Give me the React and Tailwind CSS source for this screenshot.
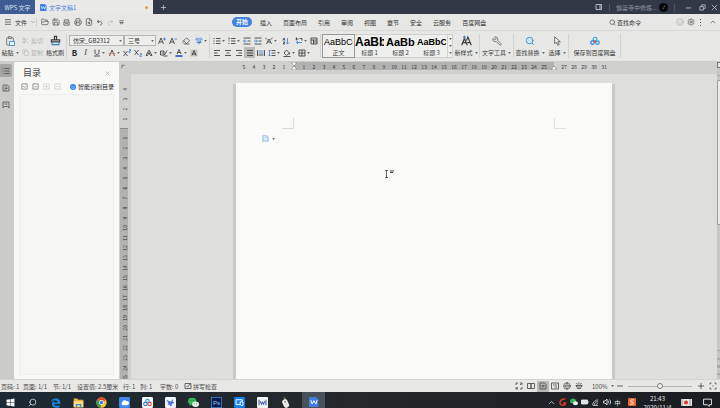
import {
  ChevronDown,
  ChevronUp,
  Clipboard,
  Copy,
  Eraser,
  FileSearch,
  FolderOpen,
  Globe,
  Menu,
  MousePointer2,
  Printer,
  Save,
  Scissors,
  Search,
  Settings,
  Smile,
  Wrench,
  X
} from "lucide-react"

const FONT = "font-['Noto_Sans_CJK_SC','Liberation_Sans',sans-serif]"

const MENU_TABS = ["插入", "页面布局", "引用", "审阅", "视图", "章节", "安全", "云服务", "百度网盘"]

const STYLES = [
  { name: "正文", preview: "text-[9px]", active: true },
  { name: "标题 1", preview: "text-[12px] font-bold" },
  { name: "标题 2", preview: "text-[11px] font-bold" },
  { name: "标题 3", preview: "text-[9px] font-bold" }
]

const H_MARKS = Array.from({ length: 37 }, (_, i) => i - 5)
const V_TOP = [4, 3, 2, 1]
const V_MARKS = Array.from({ length: 25 }, (_, i) => i + 1)

/* ---------- shared pieces ---------- */

// 16x16 line drawing
function Ico({ d, blue, size = "size-2", children }) {
  return (
    <svg viewBox="0 0 16 16" className={`${size} shrink-0`} fill="none" stroke="currentColor" strokeWidth="1.700">
      {d && <path d={d} />}
      {blue && <path d={blue} stroke="#3f7fd0" />}
      {children}
    </svg>
  )
}

function Caret() {
  return (
    <svg viewBox="0 0 4 3" className="h-[2px] w-[3px] shrink-0" fill="#666">
      <path d="M0 0h4L2 3z" />
    </svg>
  )
}

// toolbar button; `menu` adds the small drop-down caret
function Tool({ label, menu, wide, active, children }) {
  return (
    <button
      type="button"
      aria-label={label}
      className={`flex h-[11px] shrink-0 items-center ${menu || wide ? "w-[15px]" : "w-[11px]"} ${wide ? "justify-center" : ""} ${active ? "bg-[#b9b9b8]" : ""}`}
    >
      <span className="flex w-[11px] justify-center">{children}</span>
      {menu && <Caret />}
    </button>
  )
}

function BigTool({ label, menu, width, children }) {
  return (
    <button type="button" className={`flex shrink-0 flex-col items-center gap-[2px] pt-1 ${width}`}>
      <span className="flex h-[11px] items-center">{children}</span>
      <span className="flex items-center gap-[2px] whitespace-nowrap leading-[9px]">
        {label}
        {menu && <Caret />}
      </span>
    </button>
  )
}

function Combo({ label, value, width }) {
  return (
    <div className={`relative h-[11px] shrink-0 ${width}`}>
      <select
        aria-label={label}
        className="block h-full w-full appearance-none border border-[#b4b4b3] bg-[#eeeeed] pl-[3px] text-[6px] leading-[9px] text-[#333]"
      >
        <option>{value}</option>
      </select>
      <span className="pointer-events-none absolute inset-y-0 right-[2px] flex items-center">
        <Caret />
      </span>
    </div>
  )
}

function Divider() {
  return <div className="my-[3px] w-px shrink-0 bg-[#d3d3d2]" />
}

/* ---------- title bar ---------- */

function TitleBar() {
  return (
    <header className="flex h-[14px] shrink-0 items-center bg-[#333846] text-[#c9ccd3]">
      <button type="button" className="h-full w-[35px] bg-[#3e5c93] text-[6px] whitespace-nowrap text-[#dfe6f2]">
        WPS 文字
      </button>
      <div className="flex h-full w-[118px] items-center gap-[2px] bg-[#e9e9e8] px-[5px] text-[6px] text-[#4a80d6]">
        <WpsLogo size="size-[7px]" />
        <span>文字文稿1</span>
        <span className="ml-auto size-[3px] rounded-full bg-[#e39a4d]" />
      </div>
      <button type="button" aria-label="新建" className="flex w-5 justify-center">
        <Ico d="M8 2v12M2 8h12" size="size-[7px]" />
      </button>
      <div className="ml-auto flex h-full items-center text-[6px]">
        <Ico d="M2 3h8v10H2zM10 3h3v10h-3" size="size-[8px]" />
        <span className="mx-[6px] h-[7px] w-px bg-[#515663]" />
        <span className="text-[#9297a2]">伽蓝寺中修炼...</span>
        <svg viewBox="0 0 16 16" className="ml-[2px] size-[9px]">
          <circle cx="8" cy="8" r="8" fill="#07080b" />
          <path d="M8 8l3-3M6 10h2" stroke="#ccc" />
        </svg>
        <span className="mx-[6px] h-[7px] w-px bg-[#515663]" />
        <button type="button" aria-label="最小化" className="flex w-[14px] justify-center">
          <Ico d="M2 9h12" size="size-[7px]" />
        </button>
        <button type="button" aria-label="还原" className="flex w-[14px] justify-center">
          <Ico d="M2 6h8v8H2zM6 6V2h8v8h-4" size="size-[7px]" />
        </button>
        <button type="button" aria-label="关闭" className="flex w-[11px] justify-center">
          <Ico d="M2 2l12 12M14 2L2 14" size="size-[7px]" />
        </button>
      </div>
    </header>
  )
}

function WpsLogo({ size }) {
  return (
    <svg viewBox="0 0 16 16" className={`${size} shrink-0`}>
      <path d="M2 0h9l4 4v10a2 2 0 0 1-2 2H2a2 2 0 0 1-2-2V2a2 2 0 0 1 2-2z" fill="#3f7fe8" />
      <path d="M3 5l2 6 3-5 3 5 2-6" fill="none" stroke="#fff" strokeWidth="1.600" />
    </svg>
  )
}

/* ---------- menu ---------- */

function MenuBar() {
  return (
    <nav className="flex h-[17px] shrink-0 items-center border-b border-[#d9d9d8] text-[6px]">
      <button type="button" className="flex w-[37px] shrink-0 items-center gap-[3px] border-r border-[#cfcfce] pl-1">
        <Menu className="size-2" />
        文件
        <ChevronDown className="size-[6px] text-[#777]" />
      </button>
      <div className="flex w-[195px] shrink-0 pl-[2px] text-[#4c4c4c]">
        <Tool label="打开"><FolderOpen className="size-2" /></Tool>
        <Tool label="保存"><Save className="size-2" /></Tool>
        <Tool label="输出为PDF"><Ico d="M3 6V2h10v4M2 7h12v7H2zM5 10h6" size="size-[7px]" /></Tool>
        <Tool label="打印"><Printer className="size-2" /></Tool>
        <Tool label="打印预览"><FileSearch className="size-2" /></Tool>
        <Tool label="撤销"><Ico d="M6 2L3 6l4 3M3 6h6c6 0 6 7 0 8" size="size-[7px]" /></Tool>
        <Tool label="恢复">
          <span className="text-[#bbb]"><Ico d="M10 2l3 4-4 3M13 6H7c-6 0-6 7 0 8" size="size-[7px]" /></span>
        </Tool>
        <Tool label="自定义快速访问工具栏"><Ico d="M3 4h10M4 8h8l-4 4z" size="size-[7px]" /></Tool>
      </div>
      <div className="flex items-center gap-[11px] whitespace-nowrap">
        <button type="button" className="-mr-[3px] h-[10px] w-5 rounded-full bg-[#4380e0] leading-[10px] font-bold text-white">
          开始
        </button>
        {MENU_TABS.map((tab) => (
          <button type="button" key={tab}>{tab}</button>
        ))}
      </div>
      <label className="ml-auto flex w-[67px] shrink-0 items-center gap-px">
        <Search className="size-[7px]" />
        <input
          type="text"
          placeholder="查找命令"
          className="w-8 leading-[9px] outline-none placeholder:text-[#333]"
        />
      </label>
      <div className="flex shrink-0 items-center pr-[3px] text-[#555]">
        <button type="button" aria-label="反馈" className="w-[11px] text-[#aaa]"><Smile className="size-2" /></button>
        <button type="button" aria-label="设置" className="w-[13px]"><Settings className="size-2" /></button>
        <button type="button" aria-label="更多" className="flex w-[9px]">
          <svg viewBox="0 0 2 7" className="h-[7px] w-[2px]" fill="#555">
            <path d="M0 0h1v1H0zM0 3h1v1H0zM0 6h1v1H0z" />
          </svg>
        </button>
        <button type="button" aria-label="折叠功能区"><ChevronUp className="size-2" /></button>
      </div>
    </nav>
  )
}

/* ---------- ribbon ---------- */

function Ribbon() {
  return (
    <section className="flex h-[31px] shrink-0 overflow-hidden border-b border-[#cdcdcc] text-[6px] text-[#3a3a3a]">
      <BigTool label="粘贴" menu width="w-5">
        <span className="relative">
          <Clipboard className="size-[10px] text-[#666]" />
          <span className="absolute right-0 bottom-0 h-[5px] w-[6px] border border-[#4f9bd8] bg-[#eef5fb]" />
        </span>
      </BigTool>
      <div className="flex w-6 shrink-0 flex-col gap-px pt-1 text-[#b4b4b3]">
        <button type="button" className="flex h-[11px] items-center gap-[2px] pl-[2px]">
          <Scissors className="size-[7px] shrink-0" />
          <span className="whitespace-nowrap">剪切</span>
        </button>
        <button type="button" className="flex h-[11px] items-center gap-[2px] pl-[2px]">
          <Copy className="size-[7px] shrink-0" />
          <span className="whitespace-nowrap">复制</span>
        </button>
      </div>
      <BigTool label="格式刷" width="w-[22px]">
        <Ico size="size-[11px]" d="M6.500 7V2h3v5M2 7h12v3H2z" blue="M3 10v4h10v-4" />
      </BigTool>
      <Divider />

      <div className="flex w-[142px] shrink-0 flex-col gap-px pt-1 pl-[2px]">
        <div className="flex items-center">
          <Combo label="字体" value="仿宋_GB2312" width="w-[55px]" />
          <Combo label="字号" value="三号" width="w-8" />
          <Tool label="增大字号"><Ico d="M1 14L6 2l5 12M3 10h6" blue="M13 1v6M10 4h6" /></Tool>
          <Tool label="减小字号"><Ico d="M1 14L6 2l5 12M3 10h6" blue="M11 4h5" /></Tool>
          <Tool label="清除格式" wide><Eraser className="size-2" /></Tool>
          <Tool label="拼音指南" menu><Ico blue="M4 1l2 2M12 1l-2 2M2 7V4h12v3M4 8h8l-4 3v4M3 11h10" /></Tool>
        </div>
        <div className="flex">
          <Tool label="加粗"><b className="text-[8px] leading-none text-[#222]">B</b></Tool>
          <Tool label="倾斜"><i className="font-['Liberation_Serif',serif] text-[8px] leading-none">I</i></Tool>
          <Tool label="下划线" menu><Ico d="M4 1v6c0 5 8 5 8 0V1M2 14h12" /></Tool>
          <Tool label="删除线" menu><Ico d="M3 14L8 2l5 12"><path d="M1 9h14" stroke="#e07b4a" /></Ico></Tool>
          <Tool label="上标"><Ico d="M1 4l8 10M9 4L1 14" blue="M12 1h3v3h-3v3h3" /></Tool>
          <Tool label="下标"><Ico d="M1 2l8 10M9 2L1 12" blue="M12 9h3v3h-3v3h3" /></Tool>
          <Tool label="文字效果" menu><Ico d="M2 13L8 2l6 11h-3L8 7l-3 6z" /></Tool>
          <Tool label="突出显示" menu><Ico d="M1 4h7v8H1zM3 8h4M9 12l5-9M7 14h8" /></Tool>
          <Tool label="字体颜色" menu><Ico d="M4 10L8 1l4 9M5 7h6"><path d="M1 14h14" stroke="#2340b5" strokeWidth="3" /></Ico></Tool>
          <Tool label="字符底纹">
            <Ico><path d="M1 1h14v14H1z" fill="#c4c4c3" stroke="none" /><path d="M4 13L8 3l4 10M5 10h6" /></Ico>
          </Tool>
        </div>
      </div>
      <Divider />

      <div className="flex w-[110px] shrink-0 flex-col gap-px pt-1 pl-px">
        <div className="flex">
          <Tool label="项目符号" menu><Ico d="M6 3h9M6 8h9M6 13h9M1 3h2M1 8h2M1 13h2" /></Tool>
          <Tool label="编号" menu><Ico d="M6 3h9M6 8h9M6 13h9M2 1v4M1 8h2M1 13h2" /></Tool>
          <Tool label="减少缩进"><Ico d="M1 2h14M9 8h6M1 14h14" blue="M7 8H1m3-3L1 8l3 3" /></Tool>
          <Tool label="增加缩进"><Ico d="M1 2h14M9 8h6M1 14h14" blue="M0 8h6M4 5l3 3-3 3" /></Tool>
          <Tool label="中文版式" menu><Ico d="M1 2l3 3M15 2l-4 3M3 14L8 4l5 10M5 10h6" /></Tool>
          <Tool label="排序" wide><Ico d="M2 7l2-5 2 5M2 10h4l-4 4h4" blue="M11 2v12M8 11l3 3 3-3" /></Tool>
          <Tool label="显示编辑标记" menu><Ico d="M3 1v6M1 4h6M9 3h5v4" blue="M14 11H3m3-3l-3 3 3 3" /></Tool>
          <Tool label="插入表格"><Ico d="M2 2h12v12H2zM2 6h12M7 6v8M7 10h7" /></Tool>
        </div>
        <div className="flex">
          <Tool label="左对齐"><Ico d="M2 3h12M2 8h7M2 13h12" /></Tool>
          <Tool label="居中"><Ico d="M2 3h12M5 8h6M2 13h12" /></Tool>
          <Tool label="右对齐"><Ico d="M2 3h12M7 8h7M2 13h12" /></Tool>
          <Tool label="两端对齐" active><Ico d="M2 3h12M2 8h12M2 13h12" /></Tool>
          <Tool label="分散对齐"><Ico d="M1 2v12M15 2v12M3 12h10" blue="M3 4h10M3 8h10" /></Tool>
          <Tool label="行距" menu><Ico d="M7 3h8M7 8h8M7 13h8" blue="M3 2v12M1 4l2-2 2 2M1 12l2 2 2-2" /></Tool>
          <Tool label="底纹颜色" menu><Ico d="M7 2l6 6-6 5-5-5zM13 8v3M1 15h14" /></Tool>
          <Tool label="边框" menu><Ico d="M2 2h12v12H2zM8 2v12M2 8h12" /></Tool>
        </div>
      </div>
      <Divider />

      <div className="my-[3px] ml-px flex w-[131px] shrink-0 border border-[#cfcfce] bg-[#efefee]">
        {STYLES.map((s) => (
          <button
            type="button"
            key={s.name}
            className={`flex w-[31px] shrink-0 flex-col items-center overflow-hidden px-px ${s.active ? "outline outline-[#9a9a99]" : ""}`}
          >
            <span className={`h-[14px] w-full overflow-hidden text-left font-['Liberation_Sans',sans-serif] leading-[14px] text-black ${s.preview}`}>
              AaBbCc
            </span>
            <span className="leading-[8px]">{s.name}</span>
          </button>
        ))}
        <div className="flex flex-1 flex-col items-center justify-around border-l border-[#cfcfce]">
          <Caret />
          <Caret />
          <Caret />
        </div>
      </div>
      <BigTool label="新样式" menu width="w-[26px]">
        <Ico size="size-[11px]" d="M1 15L5 5l4 10M3 11h4M8 8l2-5 5 12M9 11h5" blue="M5 1v4M3 3h4" />
      </BigTool>
      <Divider />
      <BigTool label="文字工具" menu width="w-[33px]">
        <Wrench className="size-[10px] -scale-x-100 text-[#666]" />
      </BigTool>
      <Divider />
      <BigTool label="查找替换" menu width="w-8">
        <Search className="size-[10px] fill-[#d3e4f4] text-[#3f83c8]" />
      </BigTool>
      <BigTool label="选择" menu width="w-[22px]">
        <svg viewBox="0 0 10 14" className="h-[10px] w-[7px]" fill="#f2f2f1" stroke="#555" strokeWidth="1.200">
          <path d="M1 1v10l2.500-2.500L5.500 13l2-1-2-4H9z" />
        </svg>
      </BigTool>
      <Divider />
      <BigTool label="保存到百度网盘" width="w-[51px]">
        <BaiduLogo size="size-[10px]" />
      </BigTool>
      <Divider />
    </section>
  )
}

function BaiduLogo({ size }) {
  return (
    <svg viewBox="0 0 16 16" className={size} fill="none" strokeWidth="1.800">
      <circle cx="8" cy="5" r="3" stroke="#2fa3e8" />
      <circle cx="4" cy="10.500" r="2.800" stroke="#2f74e0" />
      <circle cx="12" cy="10.500" r="2.800" stroke="#2f8ee0" />
      <circle cx="8" cy="9" r="1.800" fill="#e5493a" />
    </svg>
  )
}

/* ---------- workspace ---------- */

function Sidebar() {
  return (
    <aside className="flex w-[14px] shrink-0 flex-col gap-1 bg-[#cbcbca] pt-[2px] text-[#555]">
      <button type="button" aria-label="目录" className="flex h-[13px] w-3 items-center justify-center rounded-r-xs bg-[#a6a6a5]">
        <Ico d="M5 3h10M5 8h10M5 13h10M1 3h2M1 8h2M1 13h2" />
      </button>
      <button type="button" aria-label="章节" className="flex h-[13px] w-3 items-center justify-center">
        <Ico d="M2 2h9l3 3v9H2zM5 6h6M5 9h6M5 12h4" />
      </button>
      <button type="button" aria-label="书签" className="flex h-[13px] w-3 items-center justify-center">
        <Ico d="M2 14V2h12v12l-3-3H5zM5 6h6" />
      </button>
    </aside>
  )
}

function OutlinePanel() {
  return (
    <section className="flex w-[105px] shrink-0 flex-col bg-[#f8f8f7] px-[5px] pb-1">
      <div className="flex items-center justify-between pt-1 pr-[3px] pl-1">
        <h2 className="text-[9px] leading-[14px] text-[#444]">目录</h2>
        <button type="button" aria-label="关闭目录"><X className="size-[7px] text-[#999]" /></button>
      </div>
      <div className="flex h-[13px] items-center text-[6px] text-[#777]">
        <Tool label="展开"><Ico d="M2 2h12v12H2zM5 7l3 3 3-3" size="size-[7px]" /></Tool>
        <Tool label="收起"><Ico d="M2 2h12v12H2zM5 10l3-3 3 3" size="size-[7px]" /></Tool>
        <Tool label="上移"><span className="text-[#ccc]"><Ico d="M2 2h12v12H2zM8 5v6M5 8h6" size="size-[7px]" /></span></Tool>
        <Tool label="下移"><span className="text-[#ccc]"><Ico d="M2 2h12v12H2zM5 8h6" size="size-[7px]" /></span></Tool>
        <button type="button" className="ml-auto flex items-center gap-[2px] whitespace-nowrap text-[#222]">
          <svg viewBox="0 0 16 16" className="size-[6px]">
            <circle cx="8" cy="8" r="8" fill="#2f86ea" />
            <path d="M5 5v3M11 5v3M4 11h8" stroke="#fff" strokeWidth="1.500" />
          </svg>
          智能识别目录
        </button>
      </div>
      <div className="mt-px flex-1 border border-[#efefee] bg-[#f5f5f4]" />
    </section>
  )
}

function HorizontalRuler() {
  return (
    <div className="flex h-3 shrink-0 items-start bg-[#d0d0cf] text-[5px] text-[#333]">
      <div className="flex h-2 w-3 shrink-0 items-center pl-[2px]">
        <Ico d="M3 14V4h9" size="size-[5px]" />
      </div>
      <div className="flex flex-1 justify-center">
        {H_MARKS.map((n) => (
          <span
            key={n}
            className={`flex h-2 w-[10px] shrink-0 items-center justify-center leading-none ${n > 0 && n < 26 ? "bg-[#b2b2b0]" : ""}`}
          >
            {n === 0 || n === 26 ? (
              <svg viewBox="0 0 10 8" className="h-2 w-[10px]" strokeWidth="0.600">
                <path d={n === 0 ? "M5 0h5v8H5z" : "M0 0h5v8H0z"} fill="#b2b2b0" />
                {n === 0 && <path d="M3 0h4v2L5 4 3 2z" fill="#f5f5f4" stroke="#777" />}
                <path d="M3 8V6l2-2 2 2v2z" fill="#f5f5f4" stroke="#777" />
              </svg>
            ) : (
              Math.abs(n)
            )}
          </span>
        ))}
      </div>
    </div>
  )
}

function VerticalRuler() {
  return (
    <div className="w-3 shrink-0 overflow-hidden bg-[#d0d0cf] pl-px text-[5px] text-[#333]">
      <div className="flex w-2 flex-col pt-[10px] pb-1">
        {V_TOP.map((n) => (
          <span key={n} className="flex h-[10px] -rotate-90 items-center justify-center leading-none">{n}</span>
        ))}
      </div>
      <div className="flex w-2 flex-col border-t border-[#888] bg-[#b2b2b0] pt-1">
        {V_MARKS.map((n) => (
          <span key={n} className="flex h-[10px] -rotate-90 items-center justify-center leading-none">{n}</span>
        ))}
      </div>
    </div>
  )
}

function Document() {
  return (
    <article className="relative mt-[9px] w-[376px] bg-[#fafaf8] shadow-[-3px_1px_0_#c9c9c7,3px_1px_0_#c9c9c7]">
      <div className="flex justify-between px-[46px] pt-[35px]">
        <div className="h-[11px] w-3 border-r border-b border-[#dadad8]" />
        <div className="h-[11px] w-3 border-b border-l border-[#e2e2e0]" />
      </div>
      <button type="button" aria-label="粘贴选项" className="mt-[6px] ml-[26px] flex items-center gap-[3px]">
        <svg viewBox="0 0 16 16" className="size-[7px]">
          <path d="M1 1h10l4 4v10H1z" fill="#bcd3ee" stroke="#8fb2dd" />
          <path d="M4 5h5M4 8h8M4 11h8" stroke="#fff" strokeWidth="1.500" />
        </svg>
        <Caret />
      </button>
      {/* text cursor */}
      <svg viewBox="0 0 9 8" className="absolute top-[87px] left-[149px] h-2 w-[9px]" fill="none" stroke="#444">
        <path d="M0 .5h3M0 7.500h3M1.500 0v8" strokeWidth="0.800" />
        <path d="M5 1h4M5 2.500h3" />
      </svg>
    </article>
  )
}

function Scrollbar() {
  return (
    <div className="flex w-[3px] shrink-0 flex-col items-center bg-[#c6c7c5] pb-[3px] text-[#555]">
      <span className="h-[6px] w-full border border-r-0 border-[#777] bg-[#e6e6e5]" />
      <span className="flex h-3 items-end pb-[3px]"><Ico d="M2 11l6-6 6 6" size="size-[3px]" /></span>
      <div className="h-[145px] w-full rounded-l-xs border border-r-0 border-[#9c9c9b] bg-[#ececeb]" />
      <div className="mt-auto flex flex-col gap-[5px]">
        <Ico d="M2 5l6 6 6-6" size="size-[3px]" />
        <Ico d="M2 11l6-6 6 6M2 15l6-6 6 6" size="size-[3px]" />
        <Ico d="M3 3h10v10H3z" size="size-[3px]" />
        <Ico d="M2 5l6 6 6-6M2 1l6 6 6-6" size="size-[3px]" />
      </div>
    </div>
  )
}

/* ---------- status bar ---------- */

function StatusBar() {
  return (
    <footer className="flex h-[13px] shrink-0 items-center border-t border-[#d3d3d2] text-[6px] whitespace-nowrap text-[#4c4c4c]">
      <span className="w-[23px] pl-px">页码: 1</span>
      <span className="w-[30px]">页面: 1/1</span>
      <span className="w-6">节: 1/1</span>
      <span className="w-[46px]">设置值: 2.5厘米</span>
      <span className="w-[17px]">行: 1</span>
      <span className="w-[20px]">列: 1</span>
      <span className="w-6">字数: 0</span>
      <button type="button" className="flex items-center gap-px">
        <Ico d="M2 3h12v10H2zM5 8l2 2 6-7" />
        拼写检查
      </button>
      <div className="ml-auto flex items-center">
        <ViewButton label="全屏显示"><Ico d="M2 6V2h4M10 2h4v4M14 10v4h-4M6 14H2v-4M10 6l3-3M6 10l-3 3" /></ViewButton>
        <ViewButton label="阅读版式"><Ico d="M1 3h7v10H1zM8 3h7v10H8z" /></ViewButton>
        <ViewButton label="页面视图" active><Ico d="M2 2h9l3 3v9H2zM5 7h6M5 10h6" /></ViewButton>
        <ViewButton label="大纲"><Ico d="M1 2h14v12H1zM4 6h2M7 6h5M7 10h5" /></ViewButton>
        <ViewButton label="Web版式"><Globe className="size-2" /></ViewButton>
        <ViewButton label="护眼模式"><Ico d="M1 7h14M4 13h8M3 2l2 3M8 1v4M13 2l-2 3M3 7v3h10V7" /></ViewButton>
      </div>
      <button type="button" className="ml-[7px] flex w-6 items-center gap-[3px]">
        100%
        <Caret />
      </button>
      <button type="button" aria-label="缩小" className="w-3"><Ico d="M2 8h12" /></button>
      <input
        type="range"
        aria-label="显示比例"
        defaultValue="50"
        className="h-[6px] w-16 appearance-none bg-[linear-gradient(#b5b5b4,#b5b5b4)] bg-[length:100%_1px] bg-center bg-no-repeat [&::-webkit-slider-thumb]:size-[6px] [&::-webkit-slider-thumb]:appearance-none [&::-webkit-slider-thumb]:rounded-full [&::-webkit-slider-thumb]:border [&::-webkit-slider-thumb]:border-[#777] [&::-webkit-slider-thumb]:bg-[#f4f4f3]"
      />
      <button type="button" aria-label="放大" className="ml-[5px] w-3"><Ico d="M8 2v12M2 8h12" /></button>
      <button type="button" aria-label="最佳显示比例" className="mr-[3px]"><Ico d="M2 5V2h3M11 2h3v3M14 11v3h-3M5 14H2v-3M7 8h2" /></button>
    </footer>
  )
}

function ViewButton({ label, active, children }) {
  return (
    <button
      type="button"
      aria-label={label}
      className={`flex h-[11px] w-3 items-center justify-center ${active ? "bg-[#b9b9b8]" : ""}`}
    >
      {children}
    </button>
  )
}

/* ---------- windows taskbar ---------- */

const APPS = [
  {
    name: "Edge",
    art: <path d="M1 8C2 1 14-1 15 8v2H6c1 4 6 3 8 2v3C6 18 2 13 3 9c1-3 4-4 4-4-1 1-1 2-1 3h5c0-5-8-4-10 0z" fill="#1583dc" />
  },
  {
    name: "文件资源管理器",
    art: (
      <>
        <path d="M1 2h5l2 2h7v11H1z" fill="#e9b23c" />
        <path d="M1 6h14v9H1z" fill="#fbdc82" />
        <path d="M4 10h8v5h-2v-3H6v3H4z" fill="#3c8fd8" />
      </>
    )
  },
  {
    name: "Chrome",
    art: (
      <>
        <circle cx="8" cy="8" r="7.500" fill="#f6c433" />
        <path d="M8 8L1.500 4.300A7.500 7.500 0 0 1 14.500 4.300z" fill="#dc4638" />
        <path d="M8 8L1.500 4.300A7.500 7.500 0 0 0 7 15.400z" fill="#35a054" />
        <circle cx="8" cy="8" r="3.500" fill="#fff" />
        <circle cx="8" cy="8" r="2.600" fill="#3f7de0" />
      </>
    )
  },
  {
    name: "云盘",
    art: (
      <>
        <rect width="16" height="16" rx="2" fill="#3c86ec" />
        <path d="M5 12a3 3 0 0 1 0-5 3.500 3.500 0 0 1 6-1 3 3 0 0 1 1 6z" fill="#fff" />
      </>
    )
  },
  {
    name: "百度网盘",
    art: (
      <>
        <rect width="16" height="16" rx="2" fill="#f3f6fa" />
        <g fill="none" strokeWidth="1.600">
          <circle cx="8" cy="6" r="2.500" stroke="#2fa3e8" />
          <circle cx="5" cy="10" r="2.500" stroke="#2f74e0" />
          <circle cx="11" cy="10" r="2.500" stroke="#e5493a" />
        </g>
      </>
    )
  },
  {
    name: "迅雷",
    art: (
      <>
        <rect width="16" height="16" rx="2" fill="#f0f3fb" />
        <path d="M2 4l6 3 4-4-1 4 3 1-4 2-1 4-3-3-2 1 1-3z" fill="#4b6fe0" />
      </>
    )
  },
  {
    name: "微信",
    art: (
      <>
        <ellipse cx="6" cy="6" rx="6" ry="5" fill="#35b558" />
        <path d="M3 9l-1 4 4-2z" fill="#35b558" />
        <ellipse cx="11" cy="10.500" rx="5" ry="4" fill="#e6f2e8" />
        <path d="M4 5h1M7 5h1M9 10h1M12 10h1" stroke="#244" strokeWidth="1.200" />
      </>
    )
  },
  {
    name: "Photoshop",
    art: (
      <>
        <rect x=".5" y=".5" width="15" height="15" fill="#0b1c52" stroke="#4f8fe0" />
        <text x="8" y="11.500" textAnchor="middle" fontSize="9" fontFamily="Liberation Sans" fill="#9fc8f8">Ps</text>
      </>
    )
  },
  {
    name: "电脑管家",
    art: (
      <>
        <rect width="16" height="16" rx="2" fill="#1281f2" />
        <path d="M9 11H3V4h9v2M9 7h4v5c-2 1-4 0-4-2z" fill="none" stroke="#fff" strokeWidth="1.400" />
      </>
    )
  },
  {
    name: "WPS助手",
    art: (
      <>
        <rect width="16" height="16" rx="1" fill="#f2f3f7" />
        <path d="M3 4v8M13 4v8M5 6l1.500 5L8 7l1.500 4L11 6" fill="none" stroke="#2c4a93" strokeWidth="1.400" />
      </>
    )
  },
  {
    name: "鼠标工具",
    art: (
      <>
        <path d="M6 0l2 4" stroke="#4f9150" strokeWidth="2" />
        <rect x="4" y="3" width="8" height="13" rx="4" fill="#e6e6e4" transform="rotate(-25 8 9)" />
        <path d="M7 6l1 2" stroke="#555" strokeWidth="1.500" />
      </>
    )
  }
]

function Taskbar() {
  return (
    <div className="h-4 shrink-0 overflow-hidden bg-linear-to-r from-[#1b2a33] via-[#25272a] to-[#191d22] text-[#e4e7ea]">
      <div className="flex h-5 items-center">
        <button type="button" aria-label="开始菜单" className="flex w-[20px] justify-center">
          <svg viewBox="0 0 16 16" className="size-[9px]" fill="#fff">
            <path d="M1 3l6-1v5.500H1zM8 2l7-1v6.500H8zM1 8.500h6V14l-6-1zM8 8.500h7V15l-7-1z" />
          </svg>
        </button>
        <button type="button" aria-label="搜索" className="flex w-6 justify-center">
          <Search className="size-[9px] -scale-x-100" />
        </button>
        {APPS.map((app) => (
          <button type="button" key={app.name} aria-label={app.name} className="flex w-[23px] shrink-0 justify-center">
            <svg viewBox="0 0 16 16" className="size-[11px]">{app.art}</svg>
          </button>
        ))}
        <button type="button" aria-label="WPS 文字" className="ml-[5px] flex h-full w-[23px] items-center justify-center bg-[#48515a]">
          <WpsLogo size="size-[10px]" />
        </button>
        <div className="ml-auto flex items-center text-[6px]">
          <Tray><ChevronUp className="size-[9px]" /></Tray>
          <Tray>
            <Ico><path d="M13 2C6 1 2 5 2 10c1 6 11 6 11 0H8" stroke="#d93a26" strokeWidth="3" /></Ico>
          </Tray>
          <Tray>
            <svg viewBox="0 0 16 16" className="size-2">
              <ellipse cx="6" cy="6" rx="6" ry="5" fill="#35b558" />
              <ellipse cx="11" cy="10.500" rx="5" ry="4" fill="#e6f2e8" />
            </svg>
          </Tray>
          <Tray>
            <Ico><path d="M1 4h12v8H1zM14 6v4" fill="#e4e7ea" /></Ico>
          </Tray>
          <Tray><Ico d="M1 14C2 7 8 2 14 2M5 14c1-5 4-8 9-8M9 14c1-2 2-4 5-4M2 15h12" size="size-[7px]" /></Tray>
          <Tray><Ico d="M1 6h3l4-4v12l-4-4H1zM10 5c2 2 2 4 0 6M13 3c3 3 3 7 0 10" /></Tray>
          <Tray>中</Tray>
          <span className="ml-[3px] flex w-[11px] justify-center">
            <svg viewBox="0 0 16 16" className="size-2">
              <rect width="16" height="16" rx="2" fill="#ef6330" />
              <path d="M12 4C4 2 3 7 8 8s4 6-4 4" fill="none" stroke="#fff" strokeWidth="2" />
            </svg>
          </span>
          <div className="w-[41px] pt-[2px] text-center leading-[9px]">
            <div>21:43</div>
            <div>2020/11/4</div>
          </div>
          <span className="flex w-[17px] justify-center">
            <svg viewBox="0 0 22 14" className="h-[7px] w-[11px]">
              <rect width="22" height="14" fill="#e8e4e2" />
              <circle cx="10" cy="7" r="4" fill="#dd3526" />
              <path d="M2 0v14M18 0v14" stroke="#444" />
            </svg>
          </span>
          <button type="button" aria-label="通知" className="flex w-[25px] justify-center">
            <Ico d="M1 2h14v10h-4v3l-3-3H1z" size="size-[9px]" />
          </button>
        </div>
      </div>
    </div>
  )
}

function Tray({ children }) {
  return <span className="flex w-[11px] justify-center">{children}</span>
}

export default function App() {
  return (
    <div className={`flex h-screen flex-col overflow-hidden bg-[#e7e7e6] text-[#333] ${FONT}`}>
      <TitleBar />
      <MenuBar />
      <Ribbon />
      <main className="flex min-h-0 flex-1">
        <Sidebar />
        <OutlinePanel />
        <div className="flex min-w-0 flex-1 flex-col">
          <HorizontalRuler />
          <div className="flex min-h-0 flex-1">
            <VerticalRuler />
            <div className="flex min-w-0 flex-1 justify-center overflow-hidden bg-[#dededd]">
              <Document />
            </div>
          </div>
        </div>
        <Scrollbar />
      </main>
      <StatusBar />
      <Taskbar />
    </div>
  )
}
